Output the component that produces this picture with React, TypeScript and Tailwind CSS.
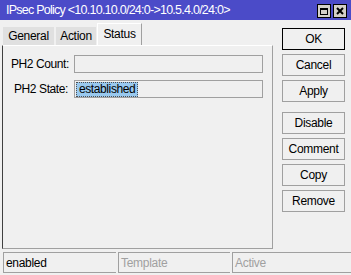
import React from "react";

const sideButtons = [
  { label: "OK", primary: true },
  { label: "Cancel" },
  { label: "Apply" },
];

const moreButtons = ["Disable", "Comment", "Copy", "Remove"];

const SideButton = ({
  label,
  primary,
}: {
  label: string;
  primary?: boolean;
}) => (
  <button
    type="button"
    className={
      "w-[63px] h-[22px] flex items-center justify-center bg-[#f0f0f0] text-[12px] tracking-[-0.3px] text-black " +
      (primary ? "border border-black" : "border border-[#a0a0a0]")
    }
  >
    {label}
  </button>
);

const App = () => {
  return (
    <div className="w-[351px] h-[275px] bg-[#f0f0f0] flex flex-col font-['Liberation_Sans',Arial,sans-serif] text-[12px] text-black overflow-hidden">
      {/* title bar */}
      <div className="h-[20px] bg-[#4b4bc8] flex items-center justify-between pl-[6px] pr-[4px]">
        <span className="text-white text-[12.5px] tracking-[-0.75px] leading-none whitespace-nowrap">
          IPsec Policy &lt;10.10.10.0/24:0-&gt;10.5.4.0/24:0&gt;
        </span>
        <div className="flex gap-[2px] pt-[2px]">
          <div className="w-[14px] h-[14px] bg-[#d4d0c8] border border-black flex items-center justify-center">
            <div className="w-[8px] h-[7px] border border-black border-t-2" />
          </div>
          <div className="w-[14px] h-[14px] bg-[#d4d0c8] border border-black flex items-center justify-center">
            <svg width="8" height="8" viewBox="0 0 8 8">
              <path d="M1 1 L7 7 M7 1 L1 7" stroke="#000" strokeWidth="2" />
            </svg>
          </div>
        </div>
      </div>

      <div className="flex flex-1">
        {/* tabs + panel */}
        <div className="w-[273px] pl-[2px] pt-[3px] flex flex-col">
          <div className="h-[22px] flex items-end pl-[1px] tracking-[-0.3px]">
            <div className="w-[51px] h-[18px] bg-[#e0e0e0] flex items-center justify-center">
              General
            </div>
            <div className="ml-[2px] w-[40px] h-[18px] bg-[#e0e0e0] flex items-center justify-center">
              Action
            </div>
            <div className="ml-[1px] w-[45px] h-[22px] bg-[#f0f0f0] border-l border-t border-white border-r border-r-[#a0a0a0] flex items-center justify-center pb-[2px]">
              Status
            </div>
          </div>
          <div className="flex-1 border-l border-l-[#404040] border-t border-t-white border-r border-r-[#a0a0a0] border-b border-b-[#a0a0a0] flex flex-col gap-[7px] pt-[9px] tracking-[-0.4px]">
            <div className="flex items-center">
              <span className="w-[71px] text-right pr-[5px] whitespace-nowrap">
                PH2 Count:
              </span>
              <div className="w-[189px] h-[18px] border border-[#a0a0a0]" />
            </div>
            <div className="flex items-center">
              <span className="w-[71px] text-right pr-[6px] whitespace-nowrap">
                PH2 State:
              </span>
              <div className="w-[189px] h-[18px] border border-[#a0a0a0] flex items-center pl-[1px]">
                <span className="bg-[#99c9ef] border border-dotted border-[#505050] px-[2px] leading-[13px]">
                  established
                </span>
              </div>
            </div>
          </div>
        </div>

        {/* buttons */}
        <div className="flex flex-col pl-[9px] pt-[8px]">
          <div className="flex flex-col gap-[4px]">
            {sideButtons.map((b) => (
              <SideButton key={b.label} label={b.label} primary={b.primary} />
            ))}
          </div>
          <div className="flex flex-col gap-[4px] mt-[10px]">
            {moreButtons.map((b) => (
              <SideButton key={b} label={b} />
            ))}
          </div>
        </div>
      </div>

      {/* status bar */}
      <div className="h-[21px] mt-[3px] mb-[2px] flex pl-[3px] gap-[2px] tracking-[-0.3px]">
        <div className="w-[113px] border-t border-l border-b border-[#a0a0a0] flex items-center pl-[2px]">
          enabled
        </div>
        <div className="w-[112px] border-t border-l border-b border-[#a0a0a0] flex items-center pl-[2px] text-[#a0a0a0]">
          Template
        </div>
        <div className="flex-1 border-t border-l border-b border-[#a0a0a0] flex items-center pl-[2px] text-[#a0a0a0]">
          Active
        </div>
      </div>
    </div>
  );
};

export default App;
